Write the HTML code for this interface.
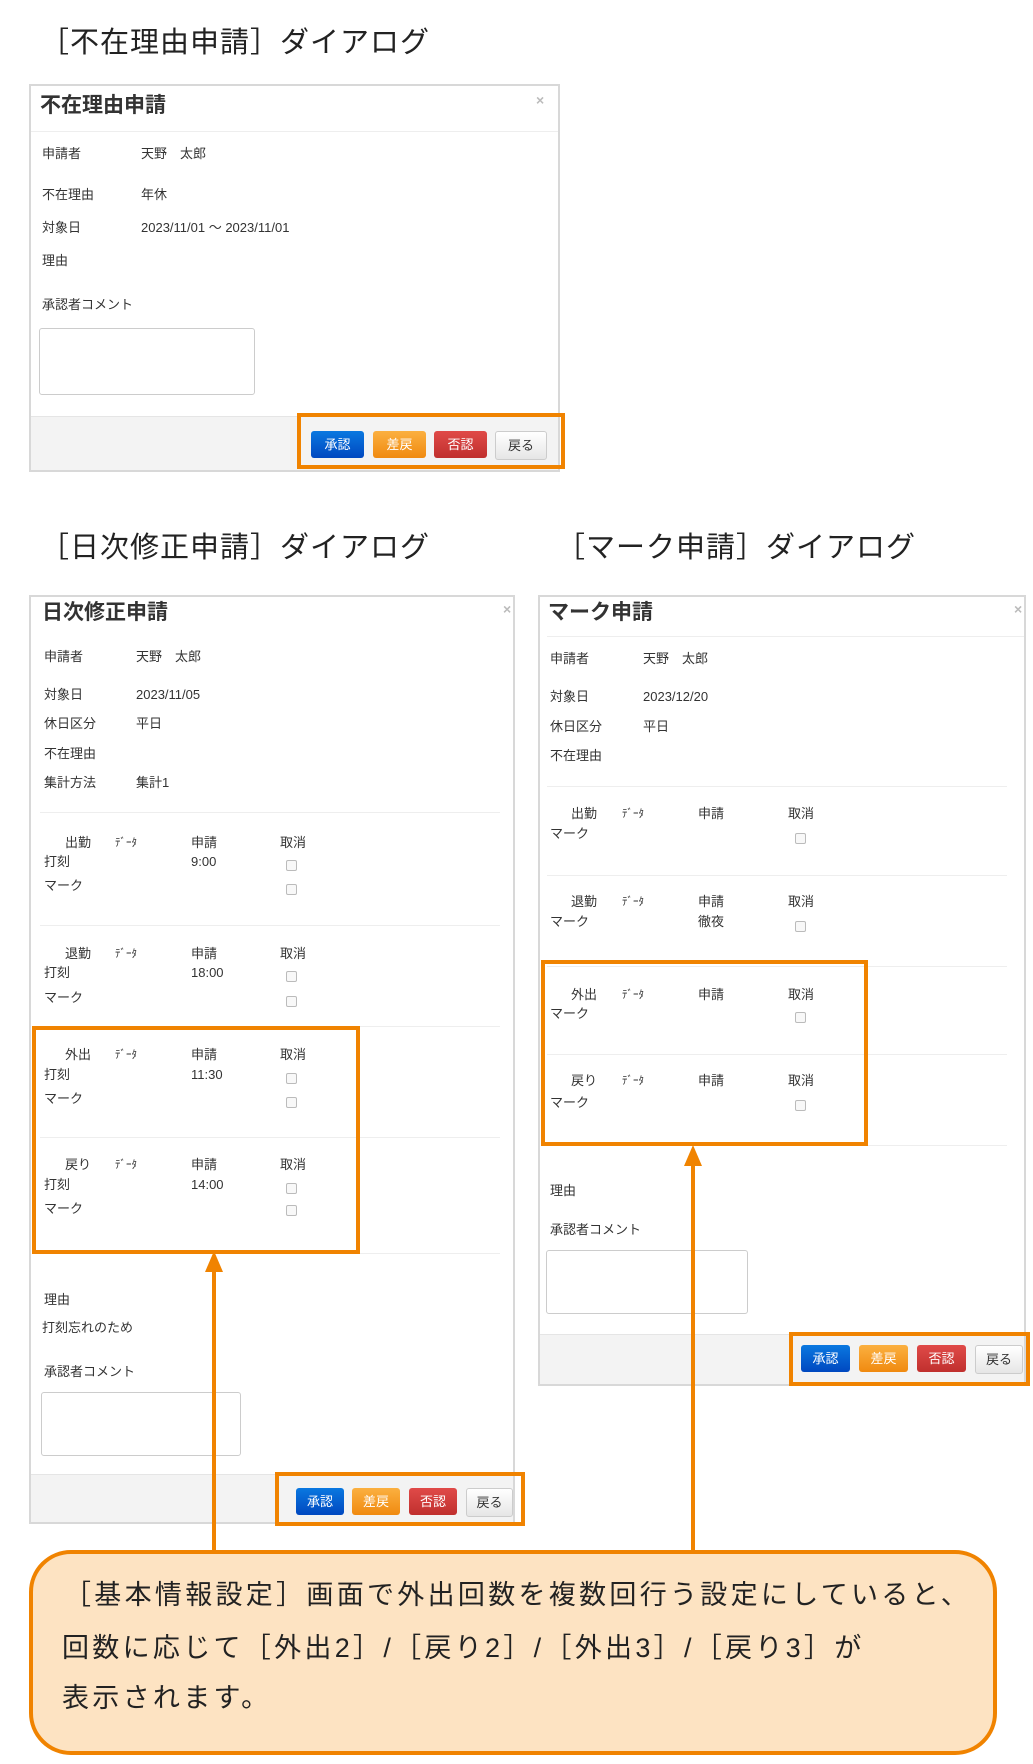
<!DOCTYPE html>
<html><head><meta charset="utf-8"><style>
*{margin:0;padding:0;box-sizing:border-box}
body{width:1033px;height:1764px;background:#fff;position:relative;overflow:hidden;font-family:"Liberation Sans","Noto Sans CJK JP",sans-serif;color:#333}
.a{position:absolute;white-space:nowrap}
.t{position:absolute;white-space:nowrap;font-size:13px;line-height:18px;color:#333}
.h{position:absolute;white-space:nowrap;font-size:29px;line-height:36px;color:#222;letter-spacing:1px}
.dlg{position:absolute;border:2px solid #d8d8d8;background:#fff}
.ttl{position:absolute;font-size:21px;font-weight:bold;line-height:26px;color:#333}
.x{position:absolute;font-size:14px;color:#bbb;font-weight:bold}
.hr{position:absolute;height:1px;background:#eee}
.foot{position:absolute;background:#f3f3f3;border-top:1px solid #e5e5e5}
.ta{position:absolute;border:1px solid #ccc;border-radius:3px;background:#fff}
.btn{position:absolute;border-radius:3px;color:#fff;font-size:13px;text-align:center;line-height:27px}
.b1{background:linear-gradient(#0a78e0,#0048c0)}
.b2{background:linear-gradient(#fbb040,#f08a10)}
.b3{background:linear-gradient(#e04a48,#c0302e)}
.b4{background:linear-gradient(#fff,#e6e6e6);color:#333;border:1px solid #ccc}
.cb{position:absolute;width:11px;height:11px;border:1px solid #bbb;border-radius:2px;background:#f8f8f8}
.ob{position:absolute;border:4px solid #f08300}
.c{position:absolute;white-space:nowrap;font-size:27px;line-height:36px;color:#222;letter-spacing:3.3px}
</style></head><body>

<div class="h" style="left:40px;top:25px">［不在理由申請］ダイアログ</div>
<div class="dlg" style="left:29px;top:84px;width:531px;height:388px">
  <div class="ttl" style="left:9px;top:7px">不在理由申請</div>
  <div class="x" style="left:505px;top:6px">×</div>
  <div class="hr" style="left:0;top:45px;width:527px"></div>
  <div class="foot" style="left:0;top:330px;width:527px;height:54px"></div>
</div>
<div class="t" style="left:42px;top:145px">申請者</div><div class="t" style="left:141px;top:145px">天野　太郎</div>
<div class="t" style="left:42px;top:186px">不在理由</div><div class="t" style="left:141px;top:186px">年休</div>
<div class="t" style="left:42px;top:219px">対象日</div><div class="t" style="left:141px;top:219px">2023/11/01 ～ 2023/11/01</div>
<div class="t" style="left:42px;top:252px">理由</div>
<div class="t" style="left:42px;top:296px">承認者コメント</div>
<div class="ta" style="left:39px;top:328px;width:216px;height:67px"></div>
<div class="btn b1" style="left:311px;top:431px;width:53px">承認</div>
<div class="btn b2" style="left:373px;top:431px;width:53px">差戻</div>
<div class="btn b3" style="left:434px;top:431px;width:53px">否認</div>
<div class="btn b4" style="left:495px;top:431px;width:52px">戻る</div>
<div class="ob" style="left:297px;top:413px;width:268px;height:56px"></div>

<div class="h" style="left:40px;top:530px">［日次修正申請］ダイアログ</div>
<div class="h" style="left:556px;top:530px">［マーク申請］ダイアログ</div>

<!-- dialog 2 -->
<div class="dlg" style="left:29px;top:595px;width:486px;height:929px">
  <div class="ttl" style="left:11px;top:3px">日次修正申請</div>
  <div class="x" style="left:472px;top:4px">×</div>
  <div class="foot" style="left:0;top:877px;width:482px;height:48px"></div>
</div>
<div class="hr" style="left:40px;top:812px;width:460px"></div>
<div class="hr" style="left:40px;top:925px;width:460px"></div>
<div class="hr" style="left:40px;top:1026px;width:460px"></div>
<div class="hr" style="left:40px;top:1137px;width:460px"></div>
<div class="hr" style="left:40px;top:1253px;width:460px"></div>
<div class="t" style="left:44px;top:648px">申請者</div><div class="t" style="left:136px;top:648px">天野　太郎</div>
<div class="t" style="left:44px;top:686px">対象日</div><div class="t" style="left:136px;top:686px">2023/11/05</div>
<div class="t" style="left:44px;top:715px">休日区分</div><div class="t" style="left:136px;top:715px">平日</div>
<div class="t" style="left:44px;top:745px">不在理由</div>
<div class="t" style="left:44px;top:774px">集計方法</div><div class="t" style="left:136px;top:774px">集計1</div>

<div class="t" style="left:65px;top:834px">出勤</div><div class="t" style="left:115px;top:834px;font-size:11px">ﾃﾞｰﾀ</div><div class="t" style="left:191px;top:834px">申請</div><div class="t" style="left:280px;top:834px">取消</div>
<div class="t" style="left:44px;top:853px">打刻</div><div class="t" style="left:191px;top:853px">9:00</div><div class="cb" style="left:286px;top:860px"></div>
<div class="t" style="left:44px;top:877px">マーク</div><div class="cb" style="left:286px;top:884px"></div>

<div class="t" style="left:65px;top:945px">退勤</div><div class="t" style="left:115px;top:945px;font-size:11px">ﾃﾞｰﾀ</div><div class="t" style="left:191px;top:945px">申請</div><div class="t" style="left:280px;top:945px">取消</div>
<div class="t" style="left:44px;top:964px">打刻</div><div class="t" style="left:191px;top:964px">18:00</div><div class="cb" style="left:286px;top:971px"></div>
<div class="t" style="left:44px;top:989px">マーク</div><div class="cb" style="left:286px;top:996px"></div>

<div class="t" style="left:65px;top:1046px">外出</div><div class="t" style="left:115px;top:1046px;font-size:11px">ﾃﾞｰﾀ</div><div class="t" style="left:191px;top:1046px">申請</div><div class="t" style="left:280px;top:1046px">取消</div>
<div class="t" style="left:44px;top:1066px">打刻</div><div class="t" style="left:191px;top:1066px">11:30</div><div class="cb" style="left:286px;top:1073px"></div>
<div class="t" style="left:44px;top:1090px">マーク</div><div class="cb" style="left:286px;top:1097px"></div>

<div class="t" style="left:65px;top:1156px">戻り</div><div class="t" style="left:115px;top:1156px;font-size:11px">ﾃﾞｰﾀ</div><div class="t" style="left:191px;top:1156px">申請</div><div class="t" style="left:280px;top:1156px">取消</div>
<div class="t" style="left:44px;top:1176px">打刻</div><div class="t" style="left:191px;top:1176px">14:00</div><div class="cb" style="left:286px;top:1183px"></div>
<div class="t" style="left:44px;top:1200px">マーク</div><div class="cb" style="left:286px;top:1205px"></div>
<div class="ob" style="left:32px;top:1026px;width:328px;height:228px"></div>

<div class="t" style="left:44px;top:1291px">理由</div>
<div class="t" style="left:42px;top:1319px">打刻忘れのため</div>
<div class="t" style="left:44px;top:1363px">承認者コメント</div>
<div class="ta" style="left:41px;top:1392px;width:200px;height:64px"></div>
<div class="btn b1" style="left:296px;top:1488px;width:48px">承認</div>
<div class="btn b2" style="left:352px;top:1488px;width:48px">差戻</div>
<div class="btn b3" style="left:409px;top:1488px;width:48px">否認</div>
<div class="btn b4" style="left:466px;top:1488px;width:47px">戻る</div>
<div class="ob" style="left:275px;top:1472px;width:250px;height:54px"></div>

<!-- dialog 3 -->
<div class="dlg" style="left:538px;top:595px;width:488px;height:791px">
  <div class="ttl" style="left:8px;top:3px">マーク申請</div>
  <div class="x" style="left:474px;top:4px">×</div>
  <div class="foot" style="left:0;top:737px;width:484px;height:50px"></div>
</div>
<div class="hr" style="left:547px;top:636px;width:477px"></div>
<div class="hr" style="left:547px;top:786px;width:460px"></div>
<div class="hr" style="left:547px;top:875px;width:460px"></div>
<div class="hr" style="left:547px;top:966px;width:460px"></div>
<div class="hr" style="left:547px;top:1054px;width:460px"></div>
<div class="hr" style="left:547px;top:1145px;width:460px"></div>
<div class="t" style="left:550px;top:650px">申請者</div><div class="t" style="left:643px;top:650px">天野　太郎</div>
<div class="t" style="left:550px;top:688px">対象日</div><div class="t" style="left:643px;top:688px">2023/12/20</div>
<div class="t" style="left:550px;top:718px">休日区分</div><div class="t" style="left:643px;top:718px">平日</div>
<div class="t" style="left:550px;top:747px">不在理由</div>

<div class="t" style="left:571px;top:805px">出勤</div><div class="t" style="left:622px;top:805px;font-size:11px">ﾃﾞｰﾀ</div><div class="t" style="left:698px;top:805px">申請</div><div class="t" style="left:788px;top:805px">取消</div>
<div class="t" style="left:550px;top:825px">マーク</div><div class="cb" style="left:795px;top:833px"></div>
<div class="t" style="left:571px;top:893px">退勤</div><div class="t" style="left:622px;top:893px;font-size:11px">ﾃﾞｰﾀ</div><div class="t" style="left:698px;top:893px">申請</div><div class="t" style="left:788px;top:893px">取消</div>
<div class="t" style="left:550px;top:913px">マーク</div><div class="t" style="left:698px;top:913px">徹夜</div><div class="cb" style="left:795px;top:921px"></div>
<div class="t" style="left:571px;top:986px">外出</div><div class="t" style="left:622px;top:986px;font-size:11px">ﾃﾞｰﾀ</div><div class="t" style="left:698px;top:986px">申請</div><div class="t" style="left:788px;top:986px">取消</div>
<div class="t" style="left:550px;top:1005px">マーク</div><div class="cb" style="left:795px;top:1012px"></div>
<div class="t" style="left:571px;top:1072px">戻り</div><div class="t" style="left:622px;top:1072px;font-size:11px">ﾃﾞｰﾀ</div><div class="t" style="left:698px;top:1072px">申請</div><div class="t" style="left:788px;top:1072px">取消</div>
<div class="t" style="left:550px;top:1094px">マーク</div><div class="cb" style="left:795px;top:1100px"></div>
<div class="ob" style="left:541px;top:960px;width:327px;height:186px"></div>

<div class="t" style="left:550px;top:1182px">理由</div>
<div class="t" style="left:550px;top:1221px">承認者コメント</div>
<div class="ta" style="left:546px;top:1250px;width:202px;height:64px"></div>
<div class="btn b1" style="left:801px;top:1345px;width:49px">承認</div>
<div class="btn b2" style="left:859px;top:1345px;width:49px">差戻</div>
<div class="btn b3" style="left:917px;top:1345px;width:49px">否認</div>
<div class="btn b4" style="left:975px;top:1345px;width:48px">戻る</div>
<div class="ob" style="left:789px;top:1332px;width:241px;height:54px"></div>

<!-- arrows -->
<svg class="a" style="left:0;top:0" width="1033" height="1764">
  <line x1="214" y1="1268" x2="214" y2="1552" stroke="#f08300" stroke-width="4"/>
  <polygon points="214,1251 205,1272 223,1272" fill="#f08300"/>
  <line x1="693" y1="1162" x2="693" y2="1552" stroke="#f08300" stroke-width="4"/>
  <polygon points="693,1145 684,1166 702,1166" fill="#f08300"/>
</svg>

<div class="a" style="left:29px;top:1550px;width:968px;height:205px;background:#fde3c2;border:4px solid #f08300;border-radius:42px"></div>
<div class="c" style="left:64px;top:1577px">［基本情報設定］画面で外出回数を複数回行う設定にしていると、</div>
<div class="c" style="left:62px;top:1630px">回数に応じて［外出2］/［戻り2］/［外出3］/［戻り3］が</div>
<div class="c" style="left:62px;top:1680px">表示されます。</div>
</body></html>
